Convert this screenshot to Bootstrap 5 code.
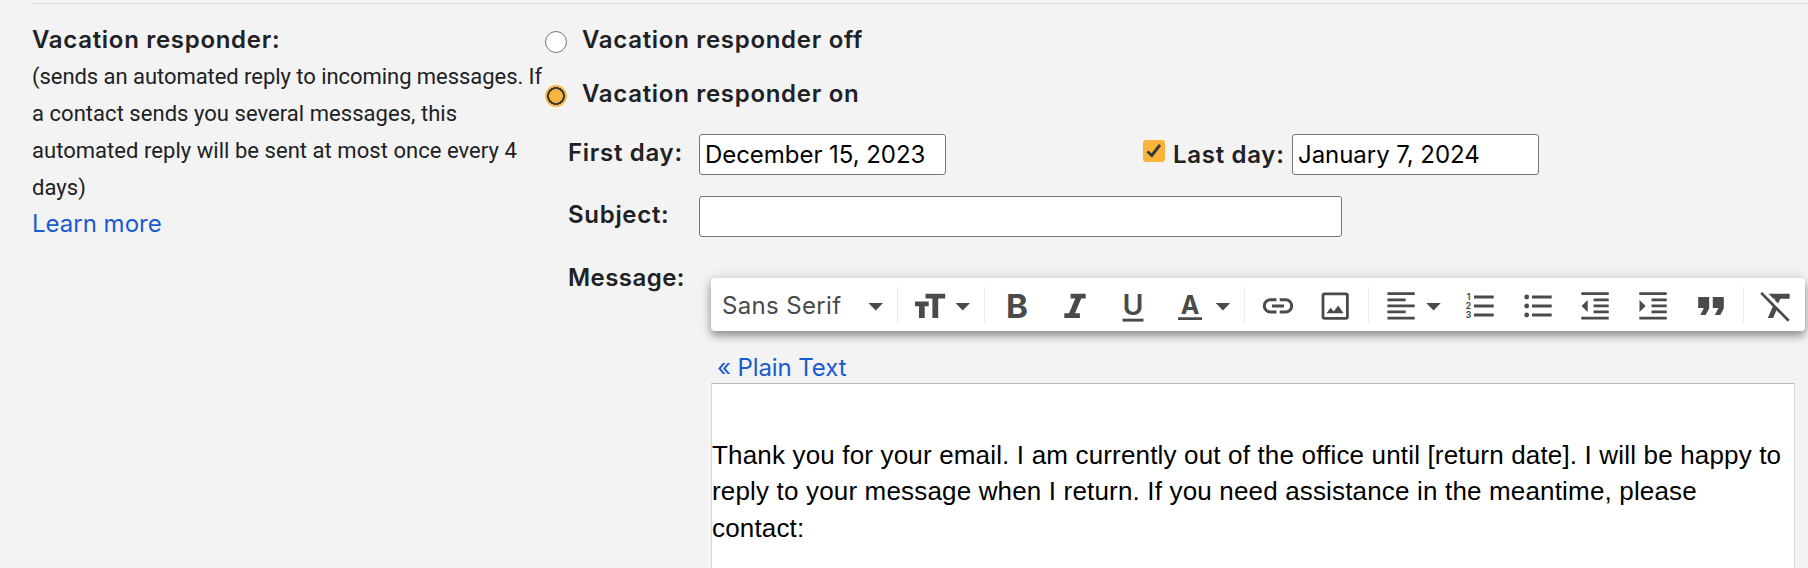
<!DOCTYPE html>
<html lang="en">
<head>
<meta charset="utf-8">
<title>Vacation responder</title>
<link href="https://cdn.jsdelivr.net/npm/bootstrap@5.3.0/dist/css/bootstrap.min.css" rel="stylesheet">
<style>
  body { background: #f3f3f3; color: #202124; font: 400 24px/37px Inter, sans-serif; height: 568px; overflow: hidden; }
  a { color: #1a5ad0; text-decoration: none; }
  .settings { margin-left: 32px; margin-top: 3px; border-top: 1px solid #e1e1e1; height: 565px; padding-top: 17px; }
  .info { width: 513px; }
  .fw-label { font-weight: 600; letter-spacing: .7px; white-space: nowrap; }
  .hint { font: 22px/37px Roboto, sans-serif; letter-spacing: .04px; white-space: nowrap; }
  .hint .tight { letter-spacing: -.05px; }
  .learn { line-height: 35px; }
  .choice { height: 54px; gap: 15px; }
  .form-check-input.pick { width: 22px; height: 22px; margin: 9.5px 0 0; border: 1.5px solid #767676; background: #fff; box-shadow: none; }
  .form-check-input.pick:checked { background: #fbb43a; border-color: #fbb43a; }
  .pick.ring:checked { background: radial-gradient(circle, #fbb43a 0 6.6px, #3a3b3d 7.1px 8.7px, #fbb43a 9.2px); background-origin: border-box; }
  .tick { width: 22px; height: 22px; margin: 6px 8px 0 0; }
  .fields { margin-left: 23px; padding-top: 5px; }
  .field-name { width: 131px; line-height: 41px; }
  .field-name.raised { margin-top: -2px; }
  .last-day { margin-left: 197px; }
  .last-day .field-name { width: 119px; }
  .subject-row { margin-top: 21px; }
  .form-control.entry { width: 247px; height: 41px; padding: 0 5px; border: 1px solid #767676; border-radius: 3px; font: 24px/39px Inter, sans-serif; color: #000; background: #fff; letter-spacing: -.05px; }
  .form-control.entry.wide { width: 643px; }
  .tools { width: 1094px; height: 53px; background: #fff; border-radius: 4px; box-shadow: 0 5px 9px rgba(0,0,0,.36), 0 0 14px rgba(0,0,0,.13); }
  .tools svg { display: block; fill: #4a4a4a; }
  .tools .btn { line-height: 0; border-radius: 0; }
  .vr-line { width: 1px; height: 36px; background: #e9ebee; flex: none; }
  .editor { width: 1084px; flex: 1; background: #fff; border: 1px solid #d6d6d6; border-top-color: #bdbdbd; border-bottom: 0; padding-top: 53px; color: #000; font: 26px/36.4px "Liberation Sans", sans-serif; letter-spacing: .165px; white-space: nowrap; }
  .plain { line-height: 31px; margin: 21px 0 0 6px; letter-spacing: -.1px; }
  .message-row { margin-top: 22px; }
  .message-name { width: 143px; letter-spacing: .45px; }
  .compose { margin-top: 19px; }
</style>
</head>
<body>
<main class="settings d-flex">
  <section class="info flex-shrink-0">
    <div class="fw-label">Vacation responder:</div>
    <div class="hint"><span class="tight">(sends an automated reply to incoming messages. If</span><br>a contact sends you several messages, this<br>automated reply will be sent at most once every 4<br>days)</div>
    <a class="learn d-block" href="#">Learn more</a>
  </section>

  <section class="d-flex flex-column flex-shrink-0">
    <label class="choice d-flex"><input class="form-check-input pick" type="radio" name="vacation"><span class="fw-label">Vacation responder off</span></label>
    <label class="choice d-flex"><input class="form-check-input pick ring" type="radio" name="vacation" checked><span class="fw-label">Vacation responder on</span></label>

    <div class="fields d-flex flex-column flex-grow-1">
      <div class="d-flex">
        <div class="fw-label field-name raised">First day:</div>
        <input class="form-control entry" value="December 15, 2023">
        <div class="last-day d-flex">
          <svg class="tick" viewBox="0 0 22 22"><rect width="22" height="22" rx="3" fill="#fbb43a"/><path d="M4.5 11.5l4.3 4L17 4.8" fill="none" stroke="#3a3b3d" stroke-width="3"/></svg>
          <div class="fw-label field-name">Last day:</div>
          <input class="form-control entry" value="January 7, 2024">
        </div>
      </div>
      <div class="subject-row d-flex">
        <div class="fw-label field-name raised">Subject:</div>
        <input class="form-control entry wide">
      </div>
      <div class="message-row d-flex flex-grow-1">
        <div class="fw-label message-name">Message:</div>
        <div class="compose d-flex flex-column">
          <div class="tools d-flex align-items-center flex-shrink-0">
            <button class="btn p-0 border-0"><svg width="186" height="53" viewBox="711 278 186 53"><text x="722" y="313.5" font-size="24" font-family="Inter" letter-spacing=".35">Sans Serif</text><path d="M868.5 303h14.5l-7.25 7.5z"/></svg></button>
            <i class="vr-line"></i>
            <button class="btn p-0 border-0"><svg width="86" height="53" viewBox="898 278 86 53"><path d="M925.5 293.7H945.2V298.5H938.2V318H932.4V298.5H925.5zM915 301.4H928.7V306.2H924.7V318H919V306.2H915zM955.5 303H970l-7.25 7.5z"/></svg></button>
            <i class="vr-line"></i>
            <button class="btn p-0 border-0"><svg width="63" height="53" viewBox="985 278 63 53"><text x="1006" y="318" font-size="33" font-weight="700" font-family="Inter" textLength="22" lengthAdjust="spacingAndGlyphs">B</text></svg></button>
            <button class="btn p-0 border-0"><svg width="57" height="53" viewBox="1048 278 57 53"><path d="M1070.6 293.7H1085.7V298.6H1081.2L1075 313.2H1079.9V318H1064.3V313.2H1069L1075.3 298.6H1070.6z"/></svg></button>
            <button class="btn p-0 border-0"><svg width="57" height="53" viewBox="1105 278 57 53"><text x="1133" y="314.8" font-size="28.5" font-weight="600" font-family="Inter" text-anchor="middle">U</text><path d="M1122.5 318.7h21v2.9h-21z"/></svg></button>
            <button class="btn p-0 border-0"><svg width="82" height="53" viewBox="1162 278 82 53"><text x="1190" y="314" font-size="25" font-weight="700" font-family="Inter" text-anchor="middle">A</text><path d="M1178 317.2h24v2.9h-24zM1215.7 303h14.5l-7.25 7.5z"/></svg></button>
            <i class="vr-line"></i>
            <button class="btn p-0 border-0"><svg width="62" height="53" viewBox="1245 278 62 53"><path d="M1276.5 299.7H1270.5A6.2 6.2 0 0 0 1270.5 312.1H1276.5M1279.7 299.7H1285.5A6.2 6.2 0 0 1 1285.5 312.1H1279.7M1272 305.9H1284" fill="none" stroke="#4a4a4a" stroke-width="3"/></svg></button>
            <button class="btn p-0 border-0"><svg width="61" height="53" viewBox="1307 278 61 53"><rect x="1323" y="293.9" width="24.4" height="24.4" rx="1.5" fill="none" stroke="#4a4a4a" stroke-width="2.8"/><path d="M1326.5 313.2l4.2-5.4 3 3.7 4.5-5.9 5.4 7.6z"/></svg></button>
            <i class="vr-line"></i>
            <button class="btn p-0 border-0"><svg width="81" height="53" viewBox="1369 278 81 53"><path d="M1387.4 292.3h27.3v2.8h-27.3zM1387.4 298.5h18.3v2.8h-18.3zM1387.4 304.5h27.3v2.8h-27.3zM1387.4 310.5h18.3v2.8h-18.3zM1387.4 316.8h27.3v2.8h-27.3zM1426.3 303h14.5l-7.25 7.5z"/></svg></button>
            <button class="btn p-0 border-0"><svg width="59" height="53" viewBox="1450 278 59 53"><g font-size="8.5" font-weight="700" font-family="Inter" text-anchor="middle"><text x="1468.5" y="300">1</text><text x="1468.5" y="309.2">2</text><text x="1468.5" y="318.2">3</text></g><path d="M1474 295.5h19.7v2.9H1474zM1474 304.5h19.7v2.9H1474zM1474 313.5h19.7v2.9H1474z"/></svg></button>
            <button class="btn p-0 border-0"><svg width="58" height="53" viewBox="1509 278 58 53"><circle cx="1526.7" cy="297" r="2.4"/><circle cx="1526.7" cy="306" r="2.4"/><circle cx="1526.7" cy="315" r="2.4"/><path d="M1532 295.5h19.7v2.9H1532zM1532 304.5h19.7v2.9H1532zM1532 313.5h19.7v2.9H1532z"/></svg></button>
            <button class="btn p-0 border-0"><svg width="58" height="53" viewBox="1567 278 58 53"><path d="M1581.3 292.3h27.4v2.8h-27.4zM1593.5 298.5h15.2v2.8h-15.2zM1593.5 304.5h15.2v2.8h-15.2zM1593.5 310.5h15.2v2.8h-15.2zM1581.3 316.8h27.4v2.8h-27.4zM1587.7 300v12l-6.2-6z"/></svg></button>
            <button class="btn p-0 border-0"><svg width="58" height="53" viewBox="1625 278 58 53"><path d="M1639.3 292.3h27.4v2.8h-27.4zM1651.5 298.5h15.2v2.8h-15.2zM1651.5 304.5h15.2v2.8h-15.2zM1651.5 310.5h15.2v2.8h-15.2zM1639.3 316.8h27.4v2.8h-27.4zM1639.5 300v12l6.2-6z"/></svg></button>
            <button class="btn p-0 border-0"><svg width="60" height="53" viewBox="1683 278 60 53"><path d="M1698.2 297h11v11.2l-3.5 6.8h-5.4l3.5-7h-5.6zM1712.8 297h11v11.2l-3.5 6.8h-5.4l3.5-7h-5.6z"/></svg></button>
            <i class="vr-line"></i>
            <button class="btn p-0 border-0"><svg width="61" height="53" viewBox="1744 278 61 53"><path d="M1768.5 293.8H1789.7V298.8H1780.3L1778.2 303.6L1774.6 299.9L1775.1 298.8H1773.5zM1773.2 305.7L1776.8 309.3L1773.2 318H1767.8z"/><path d="M1761.2 292.9L1788.7 320.8" fill="none" stroke="#4a4a4a" stroke-width="2.7"/></svg></button>
          </div>
          <a class="plain" href="#">« Plain Text</a>
          <div class="editor">Thank you for your email. I am currently out of the office until [return date]. I will be happy to<br>reply to your message when I return. If you need assistance in the meantime, please<br>contact:</div>
        </div>
      </div>
    </div>
  </section>
</main>
<script src="https://cdn.jsdelivr.net/npm/bootstrap@5.3.0/dist/js/bootstrap.bundle.min.js"></script>
</body>
</html>
